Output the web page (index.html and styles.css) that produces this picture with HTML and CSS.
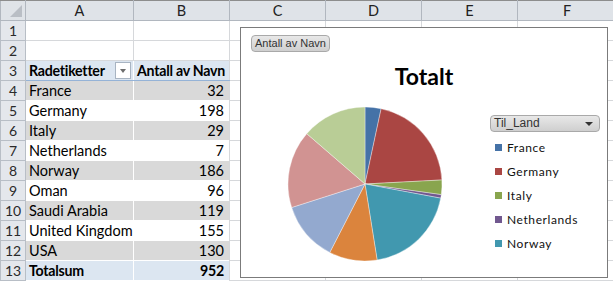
FILE: index.html
```html
<!DOCTYPE html>
<html lang="nb">
<head>
    <meta charset="UTF-8">
    <title>Pivottabell - Antall av Navn</title>
    <link rel="stylesheet" href="styles.css">
</head>
<body>

<div class="sheet">
    <table class="grid">
        <colgroup>
            <col class="col-hdr">
            <col class="col-a">
            <col class="col-b">
            <col class="col-c">
            <col class="col-c">
            <col class="col-c">
            <col class="col-f">
        </colgroup>
        <thead>
            <tr>
                <th class="corner"><span class="corner-tri"></span></th>
                <th>A</th>
                <th>B</th>
                <th>C</th>
                <th>D</th>
                <th>E</th>
                <th>F</th>
            </tr>
        </thead>
        <tbody id="rows">
            <tr><th>1</th><td></td><td></td><td></td><td></td><td></td><td></td></tr>
            <tr><th>2</th><td></td><td></td><td></td><td></td><td></td><td></td></tr>
            <tr class="pv-head">
                <th>3</th>
                <td class="pv"><span class="lbl">Radetiketter</span><span class="filter-btn"></span></td>
                <td class="pv num">Antall av Navn</td>
                <td></td><td></td><td></td><td></td>
            </tr>
        </tbody>
    </table>

    <div class="chart">
        <div class="field-btn">Antall av Navn</div>
        <div class="chart-title">Totalt</div>
        <div class="chart-body">
            <svg class="pie" id="pie" width="160" height="160" viewBox="0 0 160 160"></svg>
            <div class="legend">
                <div class="legend-btn"><span>Til_Land</span><span class="legend-arrow"></span></div>
                <ul class="legend-list" id="legend"></ul>
            </div>
        </div>
    </div>
</div>

<script>
    const data = [
        { land: 'France', antall: 32, farge: '#4572a7' },
        { land: 'Germany', antall: 198, farge: '#aa4643' },
        { land: 'Italy', antall: 29, farge: '#89a54e' },
        { land: 'Netherlands', antall: 7, farge: '#71588f' },
        { land: 'Norway', antall: 186, farge: '#4198af' },
        { land: 'Oman', antall: 96, farge: '#db843d' },
        { land: 'Saudi Arabia', antall: 119, farge: '#93a9cf' },
        { land: 'United Kingdom', antall: 155, farge: '#d19392' },
        { land: 'USA', antall: 130, farge: '#b9cd96' }
    ];

    const total = data.reduce((sum, d) => sum + d.antall, 0);

    // Pivot rows
    const rows = document.getElementById('rows');
    data.forEach((d, i) => {
        const tr = document.createElement('tr');
        tr.className = i % 2 === 0 ? 'pv-row shade' : 'pv-row';
        tr.innerHTML = `<th>${i + 4}</th><td class="pv">${d.land}</td><td class="pv num">${d.antall}</td>` +
            '<td></td><td></td><td></td><td></td>';
        rows.appendChild(tr);
    });
    const sum = document.createElement('tr');
    sum.className = 'pv-total';
    sum.innerHTML = `<th>13</th><td class="pv">Totalsum</td><td class="pv num">${total}</td><td></td><td></td><td></td><td></td>`;
    rows.appendChild(sum);

    // Pie slices, clockwise from 12 o'clock
    const pie = document.getElementById('pie');
    const cx = 80, cy = 80, r = 77;
    let angle = -Math.PI / 2;
    data.forEach(d => {
        const step = d.antall / total * Math.PI * 2;
        const x1 = cx + r * Math.cos(angle), y1 = cy + r * Math.sin(angle);
        const x2 = cx + r * Math.cos(angle + step), y2 = cy + r * Math.sin(angle + step);
        const big = step > Math.PI ? 1 : 0;
        const path = document.createElementNS('http://www.w3.org/2000/svg', 'path');
        path.setAttribute('d', `M${cx},${cy} L${x1.toFixed(2)},${y1.toFixed(2)} A${r},${r} 0 ${big} 1 ${x2.toFixed(2)},${y2.toFixed(2)} Z`);
        path.setAttribute('fill', d.farge);
        pie.appendChild(path);
        angle += step;
    });

    // Legend only shows the first five entries (the rest is cut off)
    const legend = document.getElementById('legend');
    data.slice(0, 5).forEach(d => {
        const li = document.createElement('li');
        li.innerHTML = `<span class="swatch" style="background:${d.farge}"></span>${d.land}`;
        legend.appendChild(li);
    });
</script>

</body>
</html>
```

FILE: styles.css
```css
body {
    margin: 0;
    padding: 0;
    background: #ffffff;
    font-family: Lato, "Open Sans", sans-serif;
    overflow: hidden;
}
.sheet {
    position: relative;
    width: 613px;
    height: 281px;
    overflow: hidden;
}
.grid {
    border-collapse: collapse;
    table-layout: fixed;
    width: 616px;
    font-size: 14.5px;
    color: #000;
}
.col-hdr { width: 25px; }
.col-a { width: 108px; }
.col-b { width: 96px; }
.col-c { width: 96px; }
.col-f { width: 99px; }
.grid th,
.grid td {
    height: 19px;
    padding: 0;
    border: 1px solid #d6d8db;
    white-space: nowrap;
    overflow: hidden;
    line-height: 19px;
}
.grid thead th {
    height: 19px;
    background: #dfe3e8;
    border-color: #b1b7bf;
    border-top: 1px solid #8d8d8d;
    font-weight: normal;
    color: #222;
    text-align: center;
}
.grid tbody th {
    background: #e4e7ec;
    border-color: #b8bec6;
    font-weight: normal;
    color: #2a2a2a;
    text-align: center;
    font-size: 14px;
}
.corner {
    position: relative;
}
.corner-tri {
    position: absolute;
    right: 3px;
    bottom: 3px;
    width: 0;
    height: 0;
    border-left: 12px solid transparent;
    border-bottom: 12px solid #b9bec5;
}
.grid td.pv {
    padding: 0 3px;
    border-color: transparent;
}
.grid td.pv + td.pv {
    border-right-color: #d6d8db;
}
.grid td.num {
    text-align: right;
    padding-right: 5px;
}
.pv-head td.pv,
.pv-total td.pv {
    background: #dce6f1;
    font-weight: bold;
    font-size: 14.2px;
    letter-spacing: -0.25px;
}
.pv-head td.pv {
    border-bottom-color: #95b3d7;
}
.pv-total td.pv {
    border-top-color: #95b3d7;
}
.pv-row.shade td.pv {
    background: #d9d9d9;
}
.pv-head td.pv:first-child,
.pv-head td:nth-child(2) {
    position: relative;
}
.filter-btn {
    position: absolute;
    right: 2px;
    top: 1px;
    width: 14px;
    height: 15px;
    background: #fff;
    border: 1px solid #a8b4c2;
}
.filter-btn::after {
    content: "";
    position: absolute;
    left: 4px;
    top: 6px;
    border-left: 3px solid transparent;
    border-right: 3px solid transparent;
    border-top: 4px solid #6d6d6d;
}

/* chart overlay */
.chart {
    position: absolute;
    left: 240px;
    top: 27px;
    width: 366px;
    height: 249px;
    background: #fff;
    border: 1px solid #7b7b7b;
    display: flex;
    flex-direction: column;
}
.field-btn {
    align-self: flex-start;
    margin: 7px 0 0 10px;
    height: 15px;
    padding: 0 3px;
    font-family: "Liberation Sans", Arial, sans-serif;
    font-size: 11px;
    line-height: 15px;
    color: #333;
    background: linear-gradient(#e8e8e8, #cfcfcf);
    border: 1px solid #a9a9a9;
    border-radius: 4px;
}
.chart-title {
    margin-top: 10px;
    text-align: center;
    font-size: 23px;
    font-weight: bold;
    line-height: 28px;
    color: #000;
}
.chart-body {
    display: flex;
    margin-top: 14px;
}
.pie {
    margin-left: 44px;
    flex: none;
}
.pie path {
    stroke: #ffffff;
    stroke-width: 0.6;
    stroke-opacity: 0.6;
}
.legend {
    margin: 11px 0 0 45px;
    width: 110px;
}
.legend-btn {
    position: relative;
    height: 15px;
    padding-left: 3px;
    font-family: "Liberation Sans", Arial, sans-serif;
    font-size: 12px;
    line-height: 15px;
    color: #333;
    background: linear-gradient(#e8e8e8, #cfcfcf);
    border: 1px solid #a9a9a9;
    border-radius: 4px;
}
.legend-arrow {
    position: absolute;
    right: 6px;
    top: 6px;
    border-left: 4px solid transparent;
    border-right: 4px solid transparent;
    border-top: 4px solid #333;
}
.legend-list {
    list-style: none;
    margin: 3px 0 0 0;
    padding: 0 0 0 5px;
}
.legend-list li {
    display: flex;
    align-items: center;
    height: 24px;
    font-size: 12px;
    letter-spacing: 0.6px;
    color: #111;
}
.swatch {
    width: 7px;
    height: 7px;
    margin-right: 5px;
    flex: none;
}
```
